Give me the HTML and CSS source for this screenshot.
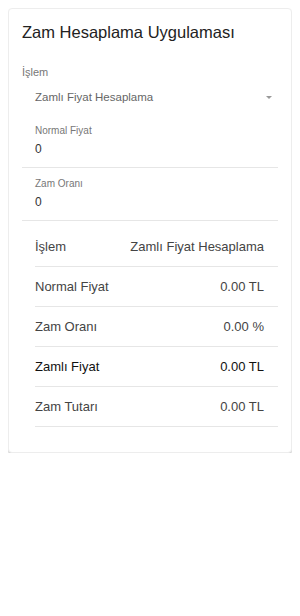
FILE: index.html
```html
<!DOCTYPE html>
<html lang="tr">
<head>
    <meta charset="UTF-8">
    <title>Zam Hesaplama Uygulaması</title>
    <link rel="stylesheet" href="styles.css">
</head>
<body>
    <div class="card">
        <h2 class="title">Zam Hesaplama Uygulaması</h2>

        <div class="form">
            <label class="select-label">İşlem</label>
            <div class="select">
                <span>Zamlı Fiyat Hesaplama</span>
                <i class="arrow"></i>
            </div>

            <div class="field">
                <label>Normal Fiyat</label>
                <div class="value">0</div>
            </div>
            <div class="field">
                <label>Zam Oranı</label>
                <div class="value">0</div>
            </div>
        </div>

        <div class="result">
            <div class="row">
                <span>İşlem</span>
                <span>Zamlı Fiyat Hesaplama</span>
            </div>
            <div class="row">
                <span>Normal Fiyat</span>
                <span>0.00 TL</span>
            </div>
            <div class="row">
                <span>Zam Oranı</span>
                <span>0.00 %</span>
            </div>
            <div class="row strong">
                <span>Zamlı Fiyat</span>
                <span>0.00 TL</span>
            </div>
            <div class="row">
                <span>Zam Tutarı</span>
                <span>0.00 TL</span>
            </div>
        </div>
    </div>
</body>
</html>
```

FILE: styles.css
```css
body{
    margin: 8px;
    font-family: "Liberation Sans", Arial, sans-serif;
    background: #fff;
}
h2,p{margin:0;}

.card{
    width: 256px;
    padding: 11px 13px 25px;
    border: 1px solid #ededed;
    border-radius: 4px;
    background: #fff;
    box-shadow: 0 2px 2px rgba(0,0,0,.18);
}
.title{
    font-size: 16.5px;
    line-height: 24px;
    font-weight: normal;
    color: #222;
    margin-bottom: 21px;
}

.select-label{
    display: block;
    font-size: 11px;
    line-height: 14px;
    color: #777;
}
.select{
    display: flex;
    justify-content: space-between;
    align-items: center;
    padding: 10px 6px 10px 13px;
    font-size: 11.5px;
    line-height: 16px;
    color: #666;
}
.select .arrow{
    width: 0;
    height: 0;
    border-left: 3px solid transparent;
    border-right: 3px solid transparent;
    border-top: 3px solid #999;
}

.field{
    display: flex;
    flex-direction: column;
    gap: 4px;
    padding: 10px 0 10px 13px;
    border-bottom: 1px solid #e6e6e6;
}
.field label{
    font-size: 10px;
    line-height: 12px;
    color: #777;
}
.field .value{
    font-size: 12px;
    line-height: 16px;
    color: #333;
}

.result{
    margin: 6px 0 0 13px;
}
.result .row{
    display: flex;
    justify-content: space-between;
    padding: 12px 14px 11px 0;
    font-size: 13px;
    line-height: 16px;
    color: #444;
    border-bottom: 1px solid #e6e6e6;
}
.result .row.strong{
    color: #111;
}
```
